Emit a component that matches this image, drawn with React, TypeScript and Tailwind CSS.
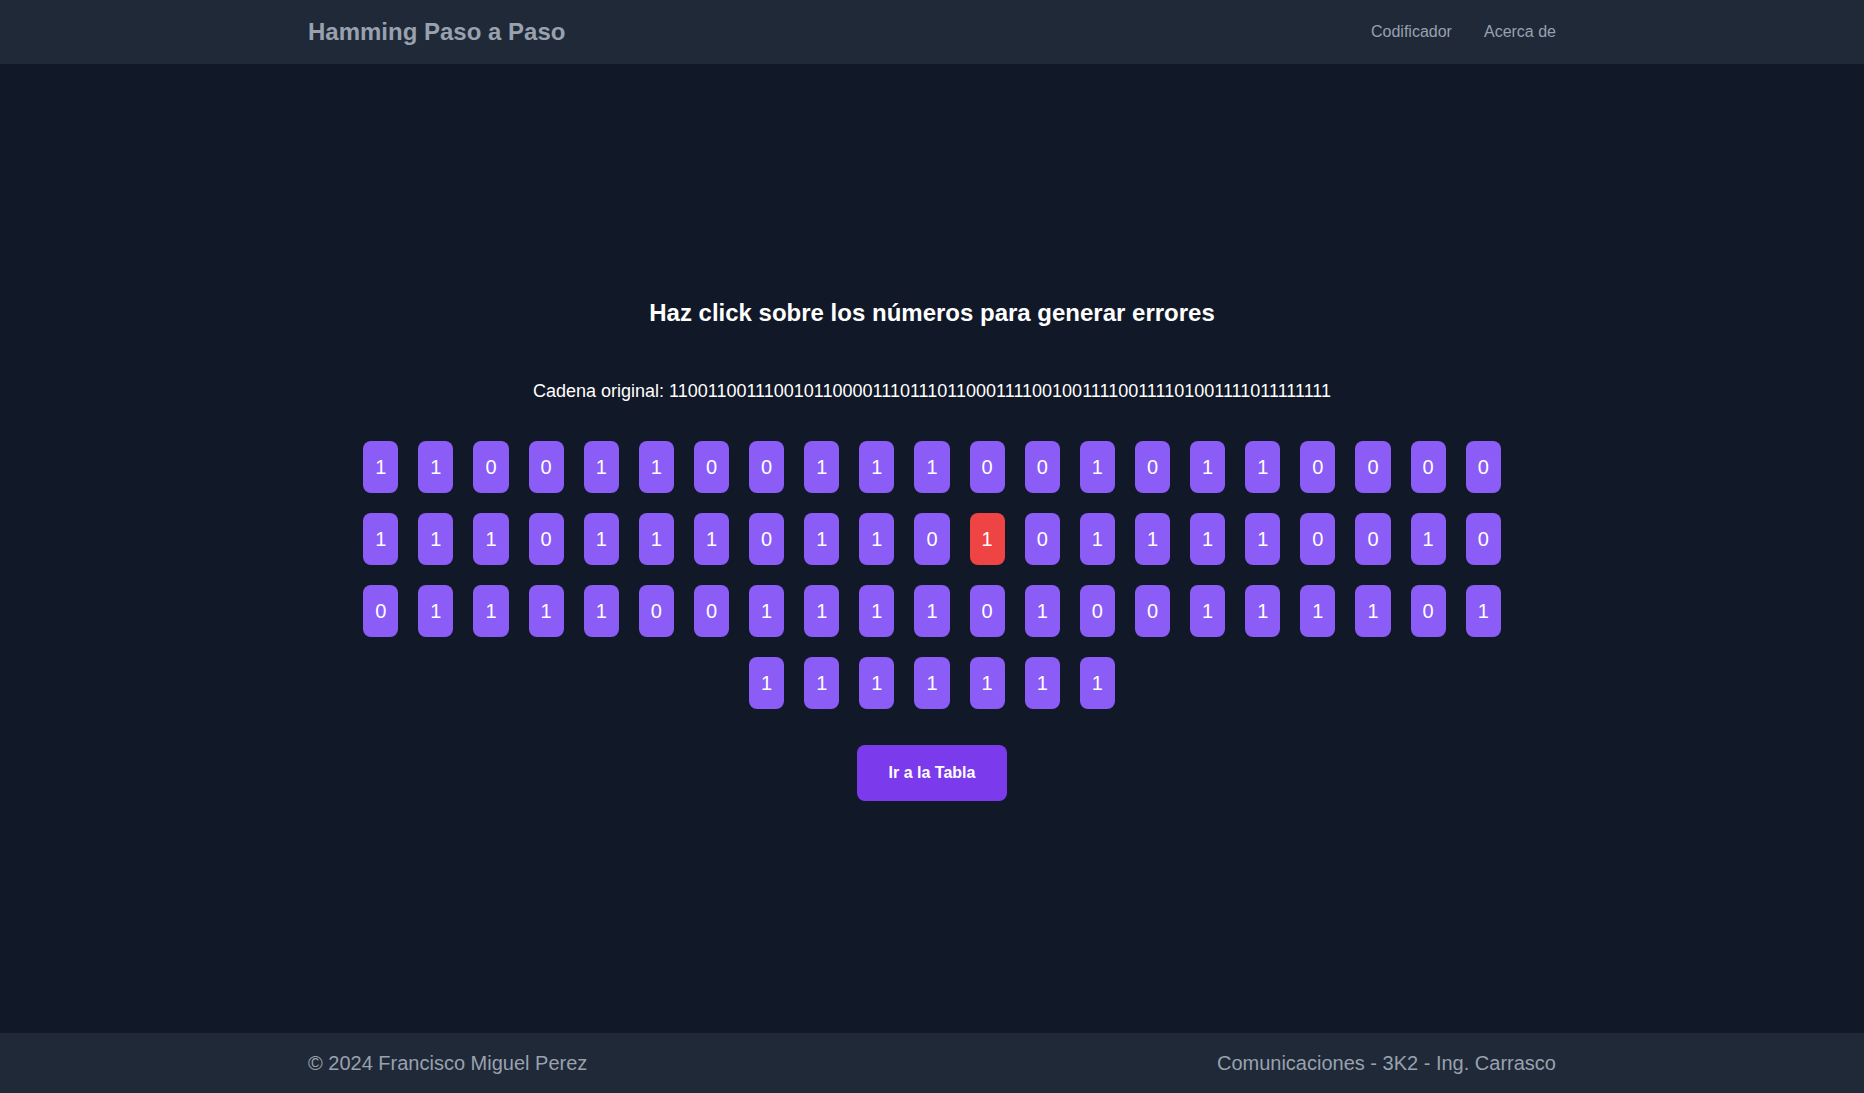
import { useState } from "react";

const cadena =
  "1100110011100101100001110111011000111100100111100111101001111011111111";

export default function App() {
  const [errores, setErrores] = useState<number[]>([32]);

  const toggle = (i: number) => {
    setErrores((prev) =>
      prev.includes(i) ? prev.filter((e) => e !== i) : [...prev, i]
    );
  };

  const bits = cadena.split("").map((b, i) =>
    errores.includes(i) ? (b === "1" ? "0" : "1") : b
  );

  return (
    <div className="min-h-screen flex flex-col bg-[#111827] font-['Liberation_Sans',Arial,sans-serif]">
      {/* Header */}
      <header className="bg-[#1f2937]">
        <div className="max-w-7xl mx-auto px-4 py-4 flex items-center justify-between">
          <h1 className="text-2xl font-bold text-gray-400">Hamming Paso a Paso</h1>
          <nav className="flex gap-8 text-base text-gray-400">
            <a href="#">Codificador</a>
            <a href="#">Acerca de</a>
          </nav>
        </div>
      </header>

      {/* Main */}
      <main className="flex-1 flex flex-col items-center justify-center px-4">
        <h2 className="text-2xl font-bold text-white mb-12">
          Haz click sobre los números para generar errores
        </h2>

        <p className="text-lg text-white mb-9">Cadena original: {cadena}</p>

        <div className="max-w-6xl w-full flex flex-wrap justify-center gap-5">
          {bits.map((b, i) => (
            <button
              key={i}
              onClick={() => toggle(i)}
              className={
                errores.includes(i)
                  ? "px-3 py-3 text-xl text-white rounded-lg bg-[#ef4444]"
                  : "px-3 py-3 text-xl text-white rounded-lg bg-[#8b5cf6]"
              }
            >
              {b}
            </button>
          ))}
        </div>

        <button className="mt-9 px-8 py-4 rounded-lg bg-[#7c3aed] text-white font-bold text-base">
          Ir a la Tabla
        </button>
      </main>

      {/* Footer */}
      <footer className="bg-[#1f2937]">
        <div className="max-w-7xl mx-auto px-4 py-4 flex items-center justify-between text-xl text-gray-400">
          <span>© 2024 Francisco Miguel Perez</span>
          <span>Comunicaciones - 3K2 - Ing. Carrasco</span>
        </div>
      </footer>
    </div>
  );
}
